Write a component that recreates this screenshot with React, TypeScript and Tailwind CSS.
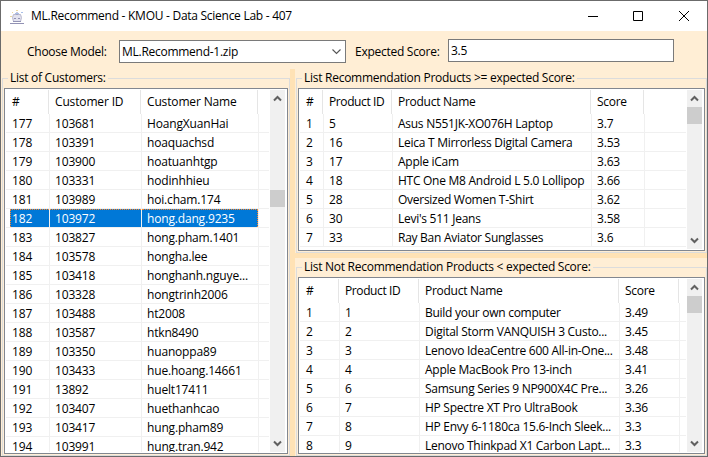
import React from "react";

type Row = string[];

const customers: Row[] = [
  ["177", "103681", "HoangXuanHai"],
  ["178", "103391", "hoaquachsd"],
  ["179", "103900", "hoatuanhtgp"],
  ["180", "103331", "hodinhhieu"],
  ["181", "103989", "hoi.cham.174"],
  ["182", "103972", "hong.dang.9235"],
  ["183", "103827", "hong.pham.1401"],
  ["184", "103578", "hongha.lee"],
  ["185", "103418", "honghanh.nguye..."],
  ["186", "103328", "hongtrinh2006"],
  ["187", "103488", "ht2008"],
  ["188", "103587", "htkn8490"],
  ["189", "103350", "huanoppa89"],
  ["190", "103433", "hue.hoang.14661"],
  ["191", "13892", "huelt17411"],
  ["192", "103407", "huethanhcao"],
  ["193", "103417", "hung.pham89"],
  ["194", "103991", "hung.tran.942"],
];

const recommended: Row[] = [
  ["1", "5", "Asus N551JK-XO076H Laptop", "3.7"],
  ["2", "16", "Leica T Mirrorless Digital Camera", "3.53"],
  ["3", "17", "Apple iCam", "3.63"],
  ["4", "18", "HTC One M8 Android L 5.0 Lollipop", "3.66"],
  ["5", "28", "Oversized Women T-Shirt", "3.62"],
  ["6", "30", "Levi's 511 Jeans", "3.58"],
  ["7", "33", "Ray Ban Aviator Sunglasses", "3.6"],
];

const notRecommended: Row[] = [
  ["1", "1", "Build your own computer", "3.49"],
  ["2", "2", "Digital Storm VANQUISH 3 Custo...", "3.45"],
  ["3", "3", "Lenovo IdeaCentre 600 All-in-One...", "3.48"],
  ["4", "4", "Apple MacBook Pro 13-inch", "3.41"],
  ["5", "6", "Samsung Series 9 NP900X4C Pre...", "3.26"],
  ["6", "7", "HP Spectre XT Pro UltraBook", "3.36"],
  ["7", "8", "HP Envy 6-1180ca 15.6-Inch Sleek...", "3.3"],
  ["8", "9", "Lenovo Thinkpad X1 Carbon Lapt...", "3.3"],
];

function Chevron({ down = false, thin = false }: { down?: boolean; thin?: boolean }) {
  return (
    <svg width="9" height="7" viewBox="0 0 9 7" fill="none" stroke={thin ? "#555" : "#606060"} strokeWidth={thin ? 1.1 : 2}>
      <path d={thin ? "M0.5 1.5 L4.5 5.5 L8.5 1.5" : down ? "M1 1.5 L4.5 5 L8 1.5" : "M1 5.5 L4.5 2 L8 5.5"} />
    </svg>
  );
}

function ScrollBar({ thumb }: { thumb: string }) {
  return (
    <div className="flex w-[15px] shrink-0 flex-col items-center bg-[#f0f0f0]">
      <div className="flex h-[17px] shrink-0 items-center justify-center">
        <Chevron />
      </div>
      <div className="flex min-h-0 w-full flex-1 flex-col">
        <div className={`h-[17px] w-full shrink-0 bg-[#cdcdcd] ${thumb}`} />
      </div>
      <div className="flex h-[17px] shrink-0 items-center justify-center">
        <Chevron down />
      </div>
    </div>
  );
}

interface ListProps {
  headers: string[];
  rows: Row[];
  cols: string[];
  thumb: string;
  selected?: string;
}

function ListView({ headers, rows, cols, thumb, selected }: ListProps) {
  return (
    <div className="flex min-h-0 flex-1 border border-[#828790] bg-white p-px pr-[2px]">
      <div className="flex min-w-0 flex-1 flex-col overflow-hidden pr-px">
        <div className="flex h-6 shrink-0">
          {headers.map((h, i) => (
            <div key={h} className={`flex shrink-0 items-center border-r border-[#e5e5e5] whitespace-nowrap ${h === "Product ID" ? "tracking-[-0.4px]" : h.startsWith("Customer") ? "tracking-[-0.15px]" : ""} ${i === 0 ? "-mr-px pl-[6px]" : "-mr-px ml-px pl-[6px]"} ${cols[i]}`}>
              {h}
            </div>
          ))}
        </div>
        <div className="min-h-0 flex-1 overflow-hidden">
          {rows.map((r) => {
            const on = r[0] === selected;
            return (
              <div key={r[0]} className="flex h-[19px] border-b border-[#f0f0f0]">
                {r.map((c, i) => (
                  <div
                    key={i}
                    className={`flex shrink-0 border-r border-[#f0f0f0] ${cols[i]} ${i === 0 ? "ml-px pl-[3px]" : ""}`}
                  >
                    <span
                      className={`flex flex-1 items-center whitespace-nowrap ${i === 0 ? "pl-[2px]" : "pl-[5px]"} ${
                        i === 2 && r.length > 3 ? "tracking-[-0.27px]" : "tracking-[-0.17px]"
                      } ${on ? "border-t border-dotted border-[#ff8728] bg-[#0078d7] pt-px text-white" : "pt-[2px]"} ${
                        on && i === 0 ? "border-l pl-px" : ""
                      } ${on && i === r.length - 1 ? "border-r" : ""}`}
                    >
                      {c}
                    </span>
                  </div>
                ))}
              </div>
            );
          })}
        </div>
      </div>
      <ScrollBar thumb={thumb} />
    </div>
  );
}

function Group({ title, size, children }: { title: string; size: string; children: React.ReactNode }) {
  return (
    <section className={`flex flex-col bg-[#ffeed5] ${size}`}>
      <div className="flex h-[17px] shrink-0 items-center">
        <div className="mt-[9px] h-2 w-[6px] border-l border-t border-[#dcdcdc]" />
        <span className="px-[2px] whitespace-nowrap">{title}</span>
        <div className="mt-[9px] h-2 flex-1 border-r border-t border-[#dcdcdc]" />
      </div>
      <div className="flex min-h-0 flex-1 flex-col border-x border-b border-[#dcdcdc] px-px pt-[2px] pb-px">{children}</div>
    </section>
  );
}

export default function App() {
  return (
    <div className="flex h-[457px] w-[708px] flex-col overflow-hidden border border-[#6b6b6b] bg-[#ffeed5] font-['Open_Sans',sans-serif] text-[12px] leading-[16px] tracking-[-0.27px] text-black">
      <header className="flex h-[30px] shrink-0 items-center bg-white pl-[9px]">
        <svg width="14" height="15" viewBox="0 0 14 15" fill="none">
          <path d="M3.5 5.5h7l1 3-1 4h-7l-1-4z" fill="#e2e2ee" stroke="#b9b9cf" />
          <path d="M4 9.5h2M8 9.5h2M0 14.5h14M7 3v3M3 12.5h8" stroke="#9292b4" />
          <path d="M6 1.5h2M2 3.5h1M0 7.5h2" stroke="#ecd9a0" />
          <path d="M11 3.5h2M5 4.5h4" stroke="#a9bfe8" />
        </svg>
        <span className="ml-[7px] flex-1 whitespace-nowrap">ML.Recommend - KMOU - Data Science Lab - 407</span>
        <svg width="120" height="12" viewBox="0 0 120 12" fill="none" stroke="#000">
          <path d="M1 6.5h10M46.5 1.5h9v9h-9zM92 1l10 10M102 1l-10 10" />
        </svg>
      </header>
      <div className="flex h-[38px] shrink-0 items-start pt-2">
        <label className="mt-[5px] w-[92px] pl-[26px] whitespace-nowrap">Choose Model:</label>
        <div className="mt-px ml-[26px] flex h-[23px] w-[227px] shrink-0 items-center justify-between border border-[#7a7a7a] bg-white pr-1 pl-[2px]">
          <span>ML.Recommend-1.zip</span>
          <Chevron down thin />
        </div>
        <label className="mt-[5px] ml-[9px] w-[93px] shrink-0 whitespace-nowrap">Expected Score:</label>
        <div className="flex h-[23px] w-[226px] shrink-0 items-center border border-[#7a7a7a] bg-white pl-[2px]">3.5</div>
      </div>
      <main className="flex min-h-0 flex-1 bg-[#ffe2b5]">
        <Group title="List of Customers:" size="w-[289px] pl-px">
          <ListView
            headers={["#", "Customer ID", "Customer Name"]}
            rows={customers}
            cols={["w-[43px]", "w-[92px]", "w-[117px]"]}
            thumb="mt-[83px]"
            selected="182"
          />
        </Group>
        <div className="ml-[5px] flex min-w-0 flex-1 flex-col gap-[5px]">
          <Group title="List Recommendation Products >= expected Score:" size="h-[184px] pl-px">
            <ListView
              headers={["#", "Product ID", "Product Name", "Score"]}
              rows={recommended}
              cols={["w-[23px]", "w-[69px]", "w-[199px]", "w-[53px]"]}
              thumb=""
            />
          </Group>
          <Group title="List Not Recommendation Products < expected Score:" size="min-h-0 flex-1 pl-px">
            <ListView
              headers={["#", "Product ID", "Product Name", "Score"]}
              rows={notRecommended}
              cols={["w-[39px]", "w-[80px]", "w-[200px]", "w-[60px]"]}
              thumb=""
            />
          </Group>
        </div>
      </main>
    </div>
  );
}
